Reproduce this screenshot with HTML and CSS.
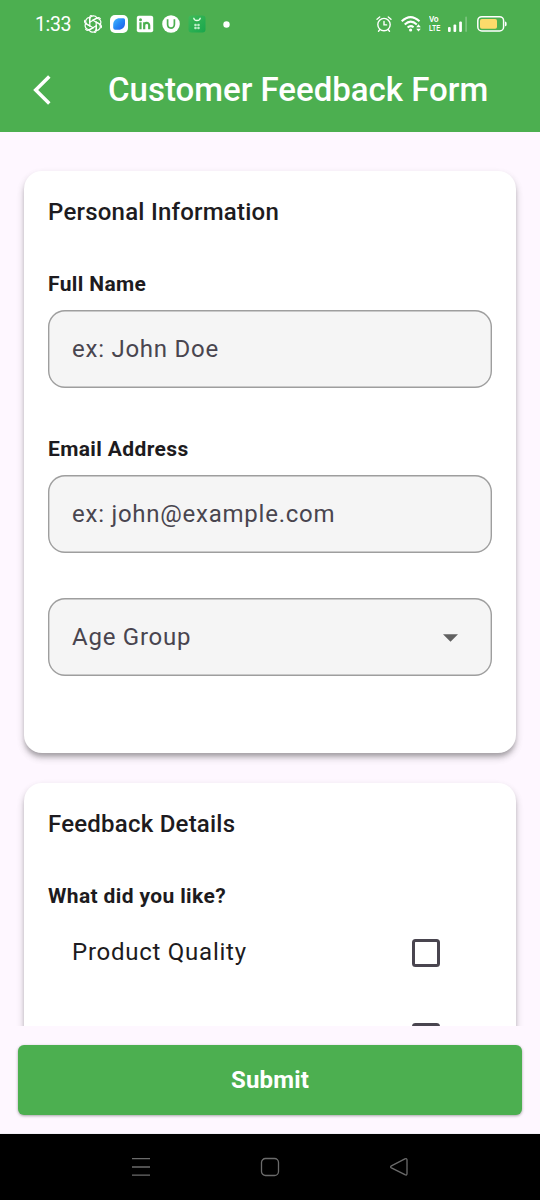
FILE: index.html
```html
<!DOCTYPE html>
<html lang="en">
<head>
<meta charset="utf-8">
<title>Customer Feedback Form</title>
<link rel="stylesheet" href="styles.css">
</head>
<body>
<div class="screen">
  <header class="top">
    <div class="status">
      <span class="clock">1:33</span>
      <div class="notifications">
        <svg width="18" height="18" viewBox="-9 -9 18 18" fill="none" stroke="#fff" stroke-width="1.2" stroke-linecap="round" stroke-linejoin="round">
          <defs><path id="petal" d="M-3.2 2V-4.6C-3.2-7-1-8.4 1-8.1 2.1-8 3-7.4 3.5-6.7M-.2-3.7L3.7-6C5-6.6 6.4-6.3 7.3-5.3"/></defs>
          <use href="#petal"/><use href="#petal" transform="rotate(60)"/><use href="#petal" transform="rotate(120)"/><use href="#petal" transform="rotate(180)"/><use href="#petal" transform="rotate(240)"/><use href="#petal" transform="rotate(300)"/>
        </svg>
        <svg width="18" height="18" viewBox="0 0 18 18">
          <defs><linearGradient id="blue" x1="0" y1="0" x2="1" y2="1"><stop offset="0" stop-color="#45b9ff"/><stop offset=".5" stop-color="#2388f5"/><stop offset="1" stop-color="#2459e8"/></linearGradient></defs>
          <rect width="18" height="18" rx="5" fill="#fff"/>
          <path d="M9.500 3.200H13.500Q15 3.200 15 4.700V8.500C15 12.300 12 14.800 8.500 14.800H5.200Q3.200 14.800 3.200 12.800V9.600C3.200 5.800 6 3.200 9.500 3.200z" fill="url(#blue)"/>
        </svg>
        <svg width="18" height="18" viewBox="0 0 18 18">
          <rect x=".8" y=".8" width="16.400" height="16.400" rx="2" fill="#fff"/>
          <circle cx="4.500" cy="4.700" r="1.500" fill="#4caf50"/>
          <path d="M4.500 7.200V14.200M8.200 7.200V14.200M8.200 10.400C8.200 7.300 13.200 7 13.200 10.400V14.200" fill="none" stroke="#4caf50" stroke-width="2.200"/>
        </svg>
        <svg width="18" height="18" viewBox="0 0 18 18">
          <circle cx="9" cy="9" r="8.800" fill="#fff"/>
          <path d="M5.600 4.300V9.300C5.600 14.300 12.400 14.300 12.400 9.300V4.300" fill="none" stroke="#4caf50" stroke-width="1.700"/>
        </svg>
        <svg width="18" height="18" viewBox="0 0 18 18">
          <defs><linearGradient id="green" x1="0" y1="0" x2="1" y2="1"><stop offset="0" stop-color="#3fba58"/><stop offset="1" stop-color="#18a64c"/></linearGradient></defs>
          <rect x=".5" y=".5" width="17" height="17" rx="3" fill="url(#green)"/>
          <path d="M5.700 2.700C6 6.400 12 6.400 12.300 2.700" fill="none" stroke="#e8ffe9" stroke-width="1.300"/>
          <path d="M6.700 9.200h1.600v1.600H6.700zM9.700 9.200h1.600v1.600H9.700zM6.700 12.200h1.600v1.600H6.700zM9.700 12.200h1.600v1.600H9.700z" fill="#d5f7dc" stroke="#d5f7dc" stroke-width=".6"/>
        </svg>
        <svg class="more" width="7" height="7" viewBox="0 0 7 7"><circle cx="3.500" cy="3.500" r="3.200" fill="#fff"/></svg>
      </div>
      <div class="system">
        <svg width="16" height="18" viewBox="0 0 16 18" fill="none" stroke="#fff" stroke-width="1.400" stroke-linecap="round">
          <circle cx="8" cy="9.600" r="6.200"/><path d="M1 4.200L3.700 2M15 4.200L12.300 2M8 6.500V9.900H10.600M3.700 14.800L2.500 16.200M12.300 14.800L13.500 16.200"/>
        </svg>
        <svg class="wifi" width="21" height="18" viewBox="0 0 21 18" fill="none" stroke="#fff" stroke-width="2">
          <path d="M.7 6.300Q9.500-2.100 18.500 6.300M3.700 9.500Q9.700 3.800 15.800 9.500M6.600 12.600Q9.600 9.800 12.600 12.200"/>
          <circle cx="9.600" cy="15" r="1.600" fill="#fff" stroke="none"/>
          <path d="M15.200 12.200L17.500 9.300 19.800 12.200zM15.200 13.700L17.500 16.600 19.800 13.700z" fill="#fff" stroke="none"/>
        </svg>
        <span class="volte"><b class="vo">Vo</b><b class="lte">LTE</b></span>
        <svg class="signal" width="20" height="18" viewBox="0 0 20 18" fill="#fff">
          <rect x="0" y="12" width="2.700" height="5" rx="1"/><rect x="5.500" y="9.500" width="2.700" height="7.500" rx="1"/><rect x="11.200" y="6.500" width="2.700" height="10.500" rx="1"/><rect x="17.200" y="1.500" width="1.800" height="15.500" rx=".9" opacity=".25"/>
        </svg>
        <svg class="battery" width="30" height="18" viewBox="0 0 30 18">
          <rect x=".8" y="1.700" width="25.800" height="14.300" rx="4" fill="none" stroke="#fff" stroke-width="1.500"/>
          <rect x="3" y="4" width="17" height="9.800" rx="1.800" fill="#fddb6b"/>
          <path d="M28 6.500q1.600 0 1.600 1.500v1.700q0 1.500-1.600 1.500z" fill="#fff"/>
        </svg>
      </div>
    </div>
    <div class="appbar">
      <svg class="back" width="20" height="30" viewBox="0 0 20 30" fill="none" stroke="#fff" stroke-width="3.500"><path d="M18.300 1.600L4.700 15 18.300 28.400"/></svg>
      <h1 class="title">Customer Feedback Form</h1>
    </div>
  </header>
  <main class="content">
    <section class="card">
      <h2 class="section-title">Personal Information</h2>
      <label class="label" for="name">Full Name</label>
      <input class="field" id="name" type="text" placeholder="ex: John Doe">
      <label class="label label-next" for="email">Email Address</label>
      <input class="field" id="email" type="text" placeholder="ex: john@example.com">
      <div class="field select" role="combobox" aria-expanded="false">
        <span>Age Group</span>
        <svg class="arrow" width="15" height="8" viewBox="0 0 15 8"><path d="M0 .3H15L7.500 7.800z" fill="#616161"/></svg>
      </div>
    </section>
    <section class="card">
      <h2 class="section-title">Feedback Details</h2>
      <h3 class="label">What did you like?</h3>
      <div class="option"><span>Product Quality</span><span class="checkbox"></span></div>
      <div class="option"><span></span><span class="checkbox"></span></div>
    </section>
  </main>
  <footer class="actions"><button class="submit">Submit</button></footer>
  <nav class="navbar">
    <svg width="20" height="20" viewBox="0 0 20 20" stroke="#6b6b6b" stroke-width="1.300"><path d="M1 1.700H19M1 10H19M1 18.200H19"/></svg>
    <svg width="20" height="20" viewBox="0 0 20 20" fill="none" stroke="#6b6b6b" stroke-width="1.300"><rect x="1.500" y="1.500" width="17" height="17" rx="4"/></svg>
    <svg width="20" height="20" viewBox="0 0 20 20" fill="none" stroke="#6b6b6b" stroke-width="1.300" stroke-linejoin="round"><path d="M2.400 8.900L15.900 1.900Q18 1 18 3V16.600Q18 18.700 15.900 17.700L2.400 10.900Q.800 9.900 2.400 8.900z"/></svg>
  </nav>
</div>
</body>
</html>
```

FILE: styles.css
```css
* { box-sizing: border-box; }
body { margin: 0; font-family: Roboto, "Liberation Sans", sans-serif; color: #1d1b20; }
h1, h2, h3 { margin: 0; }
svg { display: block; flex: none; }

.screen { display: flex; flex-direction: column; width: 540px; height: 1200px; overflow: hidden; background: #fef7ff; }

.top { flex: none; height: 132px; background: #4caf50; color: #fff; }
.status { display: flex; align-items: center; height: 48px; padding: 0 33px 0 35px; }
.clock { width: 49px; padding-top: 2px; font-size: 19.5px; line-height: 24px; letter-spacing: -0.4px; }
.notifications { display: flex; align-items: center; gap: 8px; }
.more { margin-left: 9px; }
.system { display: flex; align-items: center; margin-left: auto; }
.wifi { margin-left: 9px; }
.volte { display: flex; flex-direction: column; width: 12px; margin-left: 7px; font-family: "Liberation Sans", sans-serif; font-size: 9px; line-height: 9px; }
.volte b { transform-origin: left; }
.vo { transform: scale(0.88, 1.1); }
.lte { transform: scale(0.69, 1.1); }
.signal { margin-left: 7px; }
.battery { margin-left: 9px; }
.appbar { display: flex; align-items: center; height: 84px; padding-left: 31px; }
.title { margin-left: 57px; font-size: 33px; font-weight: 500; line-height: 42px; white-space: nowrap; }

.content { flex: none; display: flex; flex-direction: column; gap: 30px; height: 894px; padding: 39px 24px 0; overflow: hidden; }
.card { flex: none; display: flex; flex-direction: column; padding: 23px 24px 77px; border-radius: 18px; background: #fff; box-shadow: 0 4.5px 4.5px -1.5px rgba(0, 0, 0, 0.2), 0 4.5px 7.5px rgba(0, 0, 0, 0.14), 0 4px 10px rgba(0, 0, 0, 0.08); }
.section-title { margin-bottom: 39px; font-size: 24px; font-weight: 500; line-height: 36px; letter-spacing: 0.225px; }
.label { margin-bottom: 11px; font-size: 21px; font-weight: 700; line-height: 30px; letter-spacing: 0.37px; }
.label-next { margin-top: 46px; }
.field { width: 100%; height: 78px; padding: 0 24px; border: 0; border-radius: 17px; background: #f5f5f5; box-shadow: inset 0 0 0 1.4px #9e9e9e; color: #49454f; font-family: inherit; font-size: 24px; letter-spacing: 0.75px; }
.field::placeholder { color: #49454f; opacity: 1; }
.select { display: flex; align-items: center; justify-content: space-between; margin-top: 45px; padding-right: 34px; }
.arrow { margin-top: 1px; }
.option { display: flex; align-items: center; justify-content: space-between; height: 84px; padding: 0 52px 0 24px; font-size: 24px; letter-spacing: 0.75px; }
.card .label + .option { margin-top: -12px; }
.card + .card .section-title { margin-bottom: 38.5px; }
.checkbox { width: 28px; height: 28px; margin-top: 2px; border: 3px solid #49454f; border-radius: 3.5px; }

.actions { flex: none; height: 108px; padding: 19px 18px; border-bottom: 1px solid #f2eff5; }
.submit { display: block; width: 100%; height: 70px; padding: 0; border: 0; border-radius: 6px; background: #4caf50; color: #fff; font-family: inherit; font-size: 24px; font-weight: 700; letter-spacing: 0.15px; box-shadow: 0 1px 3px rgba(0, 0, 0, 0.35); }
.navbar { flex: none; display: flex; align-items: center; justify-content: center; gap: 109px; height: 66px; background: #000; }
```
